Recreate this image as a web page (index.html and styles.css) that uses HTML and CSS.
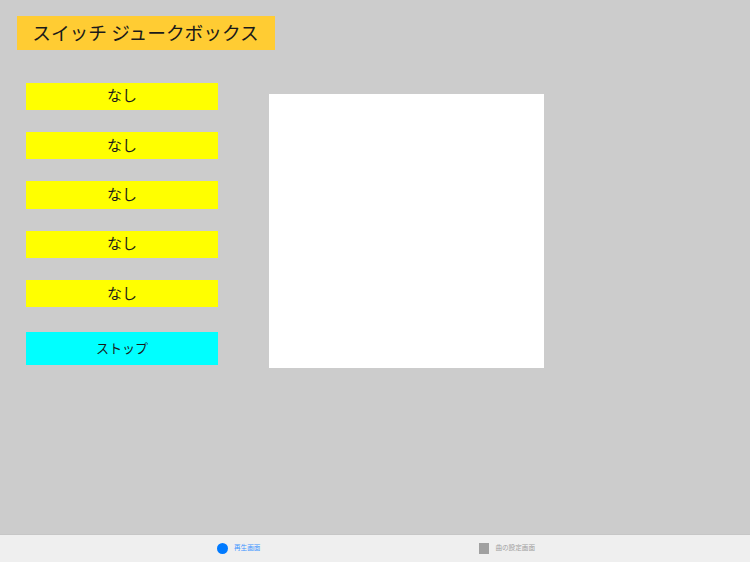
FILE: index.html
```html
<!DOCTYPE html>
<html lang="ja">
<head>
<meta charset="utf-8">
<title>スイッチ ジュークボックス</title>
<link rel="stylesheet" href="styles.css">
</head>
<body>
<main class="content">
  <h1 class="title">スイッチ ジュークボックス</h1>
  <div class="columns">
    <div class="buttons">
      <button class="song">なし</button>
      <button class="song">なし</button>
      <button class="song">なし</button>
      <button class="song">なし</button>
      <button class="song">なし</button>
      <button class="stop">ストップ</button>
    </div>
    <div class="panel"></div>
  </div>
</main>
<nav class="tabbar">
  <div class="tab tab-active"><span class="dot"></span><span class="tab-label">再生画面</span></div>
  <div class="tab"><span class="square"></span><span class="tab-label">曲の設定画面</span></div>
</nav>
</body>
</html>
```
FILE: styles.css
```css
* { box-sizing: border-box; }
html, body { margin: 0; height: 100%; }
body {
  width: 750px; height: 562px; overflow: hidden;
  background: #cccccc;
  font-family: "Noto Sans CJK JP", sans-serif;
  display: flex; flex-direction: column;
}
.content { flex: 1; padding: 16px 0 0 16.5px; }
.title {
  margin: 0; width: 258px; height: 34px;
  background: #ffcc33; color: #1a1a1a;
  font-size: 18.7px; font-weight: 400; line-height: 32px; text-align: center;
  white-space: nowrap;
}
.columns { display: flex; align-items: flex-start; padding: 32.5px 0 0 9.5px; }
.buttons { width: 192px; display: flex; flex-direction: column; gap: 22px; }
.song, .stop {
  border: 0; padding: 0; display: block; width: 192px; color: #1a1a1a;
  font-family: inherit; font-weight: 400;
}
.song { height: 27.4px; background: #ffff00; font-size: 15px; line-height: 24px; padding-bottom: 2px; }
.stop { height: 33px; background: #00ffff; font-size: 13px; line-height: 30px; padding-bottom: 2px; margin-top: 3px; }
.panel { width: 274.5px; height: 274px; margin: 11px 0 0 51px; background: #fff; }
.tabbar {
  height: 28px; background: #efefef; display: flex; flex: none;
  border-top: 1px solid #c6c6c6;
  padding: 0 215px 0 217px; justify-content: space-between; align-items: center;
}
.tab { display: flex; align-items: center; gap: 6px; }
.dot { width: 11px; height: 11px; border-radius: 50%; background: #007aff; }
.square { width: 10.5px; height: 10.5px; background: #a0a0a0; }
.tab-label { font-size: 6.6px; line-height: 9px; padding-bottom: 2px; color: #a0a0a0; }
.tab-active .tab-label { color: #3f96ff; }
```
